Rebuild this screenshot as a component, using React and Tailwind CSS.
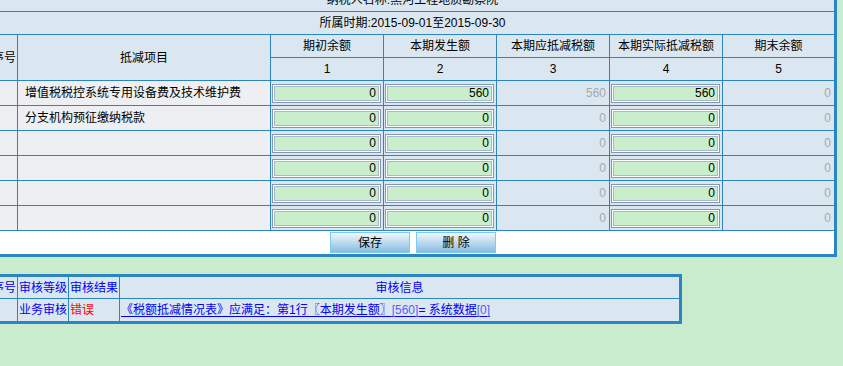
import React from "react";

const B = "border-[#2b85c1]";

function Inp({ v }) {
  return (
    <div className="w-[109px] h-[19px] ml-[1px] border border-[#8199b3] shadow-[inset_0_0_0_1px_#ffffff,inset_0_0_0_2px_#a9b9ca] bg-[#c8eecc] flex items-center justify-end pr-[4px] text-[12px] leading-none text-black">
      {v}
    </div>
  );
}

function Calc({ v, last }) {
  return (
    <div
      className={`${last ? "w-[111px]" : "w-[113px] border-r"} ${B} h-full bg-[#dbe7f0] flex items-center justify-end pr-[3px] text-[12px] text-[#a8a8a8]`}
    >
      {v}
    </div>
  );
}

function InpCell({ v }) {
  return (
    <div className={`w-[113px] border-r ${B} h-full bg-[#dbe7f0] flex items-center`}>
      <Inp v={v} />
    </div>
  );
}

const rows = [
  { name: "增值税税控系统专用设备费及技术维护费", a: "0", b: "560", c: "560", d: "560", e: "0" },
  { name: "分支机构预征缴纳税款", a: "0", b: "0", c: "0", d: "0", e: "0" },
  { name: "", a: "0", b: "0", c: "0", d: "0", e: "0" },
  { name: "", a: "0", b: "0", c: "0", d: "0", e: "0" },
  { name: "", a: "0", b: "0", c: "0", d: "0", e: "0" },
  { name: "", a: "0", b: "0", c: "0", d: "0", e: "0" },
];

const heads = [
  ["期初余额", "1"],
  ["本期发生额", "2"],
  ["本期应抵减税额", "3"],
  ["本期实际抵减税额", "4"],
  ["期末余额", "5"],
];

export default function App() {
  return (
    <div className="w-[843px] h-[366px] overflow-hidden bg-[#c8eccd] font-['Liberation_Sans','Noto_Sans_CJK_SC',sans-serif] text-[12px] text-black">
      {/* main table */}
      <div className={`ml-[-12px] mt-[-14px] w-[849px] border-[3px] ${B} bg-white`}>
        <div className={`h-[23px] border-b ${B} bg-[#dbe7f0] flex items-end justify-center pb-[2px]`}>
          纳税人名称:黑河工程地质勘察院
        </div>
        <div className={`h-[23px] border-b ${B} bg-[#dbe7f0] flex items-center justify-center`}>
          所属时期:2015-09-01至2015-09-30
        </div>
        <div className={`h-[46px] border-b ${B} bg-[#dbe7f0] flex`}>
          <div className={`w-[27px] border-r ${B} flex items-center justify-center`}>序号</div>
          <div className={`w-[253px] border-r ${B} flex items-center justify-center`}>抵减项目</div>
          {heads.map((h, i) => (
            <div
              key={i}
              className={`${i === 4 ? "w-[111px]" : "w-[113px] border-r"} ${B} flex flex-col`}
            >
              <div className={`h-[23px] border-b ${B} flex items-center justify-center`}>{h[0]}</div>
              <div className="h-[22px] flex items-center justify-center">{h[1]}</div>
            </div>
          ))}
        </div>
        {rows.map((r, i) => (
          <div key={i} className={`h-[25px] border-b ${B} flex`}>
            <div className={`w-[27px] border-r ${B} bg-[#edeff2]`} />
            <div className={`w-[253px] border-r ${B} bg-[#edeff2] flex items-center pl-[7px]`}>{r.name}</div>
            <InpCell v={r.a} />
            <InpCell v={r.b} />
            <Calc v={r.c} />
            <InpCell v={r.d} />
            <Calc v={r.e} last />
          </div>
        ))}
        <div className="h-[23px] bg-white flex items-center justify-center gap-[6px] pl-[1px]">
          <button className="w-[80px] h-[21px] border border-[#7ccaf4] bg-gradient-to-b from-[#f2f7fc] to-[#88bde0] text-[12px] text-black flex items-center justify-center">
            保存
          </button>
          <button className="w-[80px] h-[21px] border border-[#7ccaf4] bg-gradient-to-b from-[#f2f7fc] to-[#88bde0] text-[12px] text-black flex items-center justify-center">
            删 除
          </button>
        </div>
      </div>

      {/* audit table */}
      <div className={`ml-[-12px] mt-[17px] w-[694px] border-[3px] ${B} bg-[#dae7f0] text-[#0000ff]`}>
        <div className={`h-[22px] border-b ${B} flex`}>
          <div className={`w-[27px] border-r ${B} flex items-center justify-center`}>序号</div>
          <div className={`w-[51px] border-r ${B} flex items-center justify-center`}>审核等级</div>
          <div className={`w-[51px] border-r ${B} flex items-center justify-center`}>审核结果</div>
          <div className="flex-1 flex items-center justify-center">审核信息</div>
        </div>
        <div className="h-[22px] flex">
          <div className={`w-[27px] border-r ${B}`} />
          <div className={`w-[51px] border-r ${B} flex items-center justify-center`}>业务审核</div>
          <div className={`w-[51px] border-r ${B} flex items-center pl-[1px] text-[#ff0000]`}>错误</div>
          <div className="flex-1 flex items-center pl-[1px]">
            <span className="underline underline-offset-2">
              《税额抵减情况表》应满足：第1行〖本期发生额〗<span className="text-[#5a5aff]">[560]</span>= 系统数据<span className="text-[#5a5aff]">[0]</span>
            </span>
          </div>
        </div>
      </div>
    </div>
  );
}
